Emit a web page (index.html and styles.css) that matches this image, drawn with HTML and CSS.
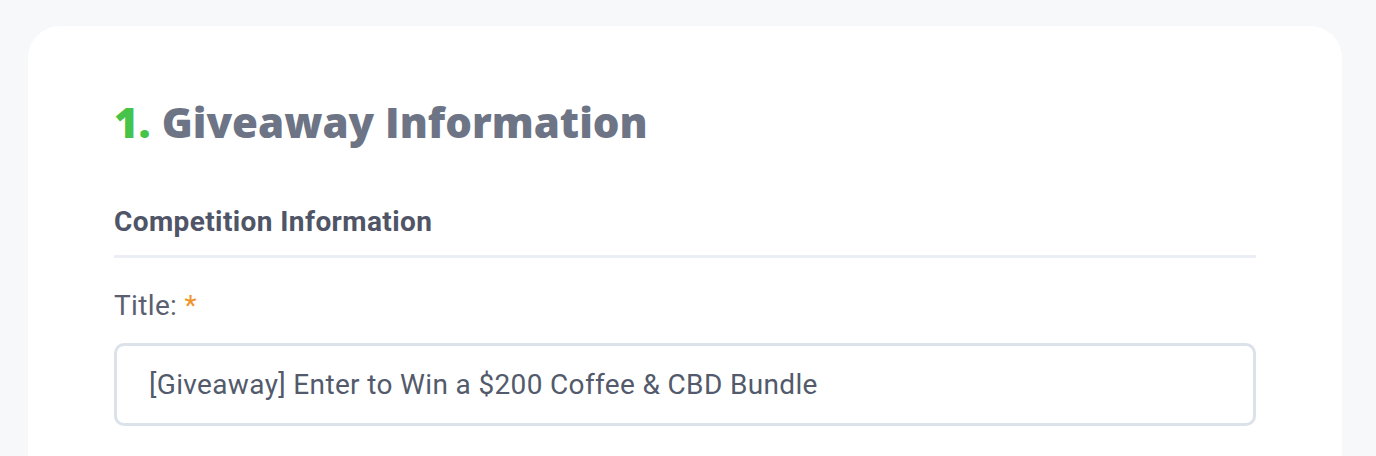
FILE: index.html
```html
<!DOCTYPE html>
<html lang="en">
<head>
  <meta charset="UTF-8" />
  <title>Giveaway Information</title>
  <link rel="stylesheet" href="styles.css">
</head>
<body>
  <div class="card">
    <h1 class="step-title"><span class="step-num">1.</span> Giveaway Information</h1>

    <div class="section">
      <h3 class="section-title">Competition Information</h3>

      <label class="field-label" for="title">Title: <span class="req">*</span></label>
      <input class="field-input" type="text" id="title" value="[Giveaway] Enter to Win a $200 Coffee &amp; CBD Bundle" />
    </div>
  </div>
</body>
</html>
```

FILE: styles.css
```css
* {
  box-sizing: border-box;
}
body {
  margin: 0;
  padding: 26px 34px 0 28px;
  background: #f7f8fa;
  font-family: Roboto, 'Liberation Sans', sans-serif;
  color: #525a6b;
  height: 456px;
  overflow: hidden;
}

.card {
  background: #fff;
  border-radius: 32px 32px 0 0;
  padding: 70px 86px 60px;
  min-height: 500px;
}

.step-title {
  margin: 0 0 56px;
  font-family: 'Open Sans', 'DejaVu Sans', sans-serif;
  font-weight: 800;
  font-size: 42px;
  line-height: 52px;
  color: #6d7485;
}
.step-num {
  color: #45c34a;
}

.section-title {
  margin: 0;
  padding-bottom: 15px;
  border-bottom: 3px solid #eceef5;
  font-size: 28px;
  font-weight: 700;
  line-height: 36px;
  letter-spacing: 0.4px;
  color: #4f5566;
}

.field-label {
  display: block;
  margin-top: 30px;
  font-size: 28px;
  line-height: 36px;
  letter-spacing: 0.35px;
  color: #5a6070;
}
.req {
  color: #f0932b;
}

.field-input {
  display: block;
  width: 100%;
  height: 83px;
  margin-top: 19px;
  padding: 0 32px;
  border: 3px solid #dbe2e9;
  border-radius: 10px;
  font-family: Roboto, 'Liberation Sans', sans-serif;
  font-size: 28px;
  letter-spacing: 0.35px;
  color: #525a6b;
  background: #fff;
  outline: none;
}
```
